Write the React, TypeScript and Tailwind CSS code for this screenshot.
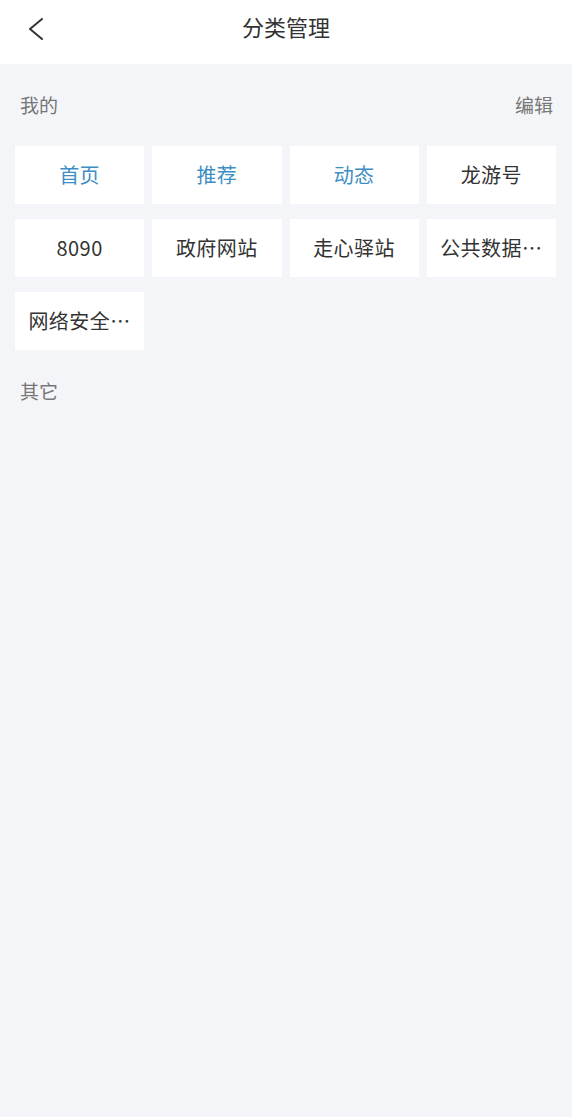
const mine = [
  { label: "首页", active: true },
  { label: "推荐", active: true },
  { label: "动态", active: true },
  { label: "龙游号" },
  { label: "8090" },
  { label: "政府网站" },
  { label: "走心驿站" },
  { label: "公共数据…" },
  { label: "网络安全…" },
];

export default function App() {
  return (
    <div
      className="min-h-[1117px] bg-[#f4f5f9]"
      style={{ fontFamily: '"Noto Sans CJK SC", "Noto Sans", sans-serif' }}
    >
      <header className="relative flex h-16 items-center justify-center bg-white">
        <button type="button" className="absolute left-[26px] top-[16px] text-[#333]" aria-label="返回">
          <svg width="20" height="26" viewBox="0 0 20 26" fill="none" stroke="currentColor" strokeWidth={2} strokeLinecap="round" strokeLinejoin="round">
            <polyline points="16,3 4,13 16,23" />
          </svg>
        </button>
        <h1 className="-mt-[12px] text-[22px] font-normal text-[#333]">分类管理</h1>
      </header>

      <div className="flex items-center justify-between px-5 pt-[27px] text-[19px] text-[#777]">
        <span>我的</span>
        <span className="-mr-[1px]">编辑</span>
      </div>

      <div className="mt-[26px] grid grid-cols-4 gap-x-2 gap-y-[15px] pl-[15px] pr-4">
        {mine.map((item) => (
          <div
            key={item.label}
            className={`flex h-[58px] items-center justify-center whitespace-nowrap bg-white px-[8px] text-[20px] tracking-[0.5px] ${
              item.active ? "text-[#3d8ec4]" : "text-[#333]"
            }`}
          >
            {item.label}
          </div>
        ))}
      </div>

      <div className="px-5 pt-[27px] text-[19px] text-[#777]">其它</div>
    </div>
  );
}
